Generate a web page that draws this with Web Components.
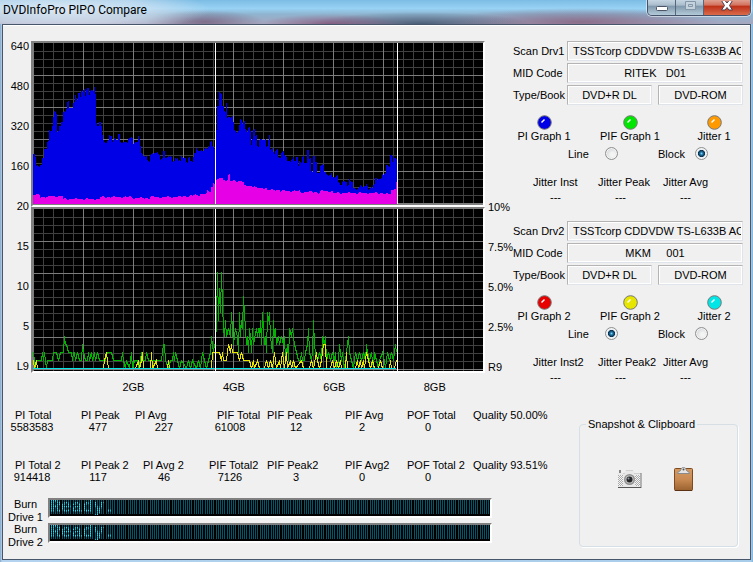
<!DOCTYPE html>
<html lang="en">
<head>
<meta charset="utf-8">
<title>DVDInfoPro PIPO Compare</title>
<style>
    body {
        margin: 0;
        font: 11px/12px "Liberation Sans", Arial, sans-serif;
        color: #000;
        background: #b3cbe6;
    }
</style>
</head>
<body>
<pipo-window heading="DVDInfoPro PIPO Compare">
    <scan-graphs slot="graphs"></scan-graphs>
    <drive-panel slot="drives" number="1" mid="RITEK   D01" colors="#0000e6,#00e600,#ff9900" mode="Block"></drive-panel>
    <drive-panel slot="drives" number="2" suffix="2" mid="MKM     001" colors="#e60000,#e6e600,#00e6e6" mode="Line"></drive-panel>
    <scan-totals slot="status"></scan-totals>
    <led-display slot="status" label="Burn Drive 1">Ready.</led-display>
    <led-display slot="status" label="Burn Drive 2">Ready.</led-display>
    <snapshot-box slot="tools"></snapshot-box>
</pipo-window>

<script>
class PipoWindow extends HTMLElement {
    connectedCallback() {
        this.attachShadow({ mode: 'open' });
        this.shadowRoot.innerHTML = `
            <style>
                :host {
                    display: flex;
                    flex-direction: column;
                    min-height: 100vh;
                    box-sizing: border-box;
                    padding: 0 2px 2px;
                    background: linear-gradient(90deg, #86a6c4, #b3d3f0 2px, #a8cdea calc(100% - 2px), #7fb4dc);
                }

                header {
                    display: flex;
                    justify-content: space-between;
                    height: 24px;
                    margin: 0 -2px;
                    background:
                        radial-gradient(ellipse 150px 24px at 60px 10px, rgba(225, 234, 244, 0.9), rgba(220, 230, 242, 0.6) 60%, transparent),
                        radial-gradient(ellipse 60px 12px at 205px 22px, rgba(110, 85, 115, 0.7), transparent),
                        radial-gradient(ellipse 70px 10px at 330px 24px, rgba(125, 70, 110, 0.7), transparent),
                        radial-gradient(ellipse 110px 12px at 420px 24px, rgba(50, 75, 100, 0.8), transparent),
                        radial-gradient(ellipse 140px 14px at 580px 22px, rgba(130, 85, 115, 0.7), transparent),
                        linear-gradient(#7cbce4, #98d2f4 35%, #8fb4cf 60%, #a7a6bf);
                }

                h1 {
                    margin: 0;
                    padding: 1px 3px;
                    font: 12px/18px Roboto, "Open Sans", sans-serif;
                }

                .buttons {
                    display: flex;
                    height: 15px;
                    margin-right: 2px;
                    border: 1px solid #45536a;
                    border-top: 0;
                    border-radius: 0 0 5px 5px;
                    box-shadow: 0 0 0 1px rgba(255, 255, 255, 0.5);
                    overflow: hidden;
                }

                button {
                    width: 28px;
                    padding: 0;
                    border: 0;
                    border-right: 1px solid #56677c;
                    background: linear-gradient(#c5d5e2, #aabccb 35%, #8098ab 40%, #b2cad8);
                }

                button.close {
                    width: 46px;
                    border-right: 0;
                    background: linear-gradient(#e0a090, #d2705c 35%, #bd2f18 40%, #d96c4a);
                }

                svg {
                    display: block;
                    margin: 0 auto;
                }

                main {
                    flex: 1;
                    border: 1px solid #47566b;
                    background: #f0f0f0;
                    box-shadow: inset 0 1px #fff;
                }

                .top {
                    display: grid;
                    grid-template-columns: 1fr 237px;
                    padding-top: 1px;
                }

                .drives {
                    padding: 15px 7px 0 0;
                }

                .bottom {
                    display: grid;
                    grid-template-columns: 1fr 159px;
                    padding: 8px 12px 11px 0;
                }
            </style>
            <header>
                <h1></h1>
                <div class="buttons">
                    <button aria-label="Minimize"><svg width="14" height="14"><rect x="1.5" y="5.500" width="11" height="4" rx="1" fill="#fff" stroke="#4a5568"/></svg></button>
                    <button aria-label="Maximize" disabled><svg width="14" height="14"><path d="M2.500 .5h10v8h-10zM5.500 3.500h4v2h-4z" fill="#c4d2de" stroke="#8496a8"/></svg></button>
                    <button class="close" aria-label="Close"><svg width="14" height="14"><path d="M1.500-.5h3.500l2 2.500 2-2.500h3.500L9.500 4.500l3 4.500H9L7 6.500 5 9H1.500l3-4.500z" fill="#fff" stroke="#4c3a48"/></svg></button>
                </div>
            </header>
            <main>
                <div class="top">
                    <slot name="graphs"></slot>
                    <div class="drives"><slot name="drives"></slot></div>
                </div>
                <div class="bottom">
                    <div><slot name="status"></slot></div>
                    <slot name="tools"></slot>
                </div>
            </main>
        `;
        this.shadowRoot.querySelector('h1').textContent = this.getAttribute('heading');
    }
}

// x,y pairs in plot pixels, 450 x 161
const PI_1 = '0,111 2,114 3,124 7,121 9,115 11,105 14,100 16,88 19,83 20,75 21,68 23,69 24,88 26,84 28,79 30,70 33,66 34,57 36,65 39,64 40,60 42,54 43,57 45,49 47,54 48,48 50,45 52,53 53,48 54,46 56,52 57,48 60,47 61,42 62,49 63,79 64,84 66,79 68,84 69,94 70,99 74,97 76,92 79,99 81,97 85,91 87,98 91,100 95,96 98,94 100,99 105,92 106,96 107,105 108,112 112,113 114,117 116,118 117,112 121,110 125,111 127,115 130,109 132,115 135,115 137,112 139,118 142,115 145,119 148,113 150,115 153,118 155,114 157,119 160,114 161,111 163,106 167,108 171,106 173,107 175,103 177,98 179,103 181,105 182,87 184,65 186,50 188,51 189,63 191,67 193,58 194,75 198,74 200,80 201,88 204,87 206,82 207,76 209,80 212,88 215,84 217,88 218,102 219,95 220,86 222,94 224,104 226,97 230,95 233,104 235,97 236,92 237,107 240,110 242,106 245,114 248,110 251,113 254,118 258,115 261,119 263,114 265,124 266,119 269,112 271,120 274,107 276,117 278,129 280,112 282,119 284,129 287,124 289,122 291,129 293,132 296,130 299,135 302,134 305,140 309,138 314,144 316,138 320,145 327,144 333,141 335,145 340,142 342,137 345,135 347,135 349,131 351,130 353,124 355,124 357,112 359,119 360,113 363,115';
const PI_2 = '0,152 7,154 17,153 30,156 47,156 67,154 100,155 117,154 150,153 160,152 167,151 174,148 178,144 180,140 183,137 186,135 190,137 195,132 197,138 209,139 211,143 219,143 222,145 234,147 247,148 267,149 284,150 287,148 300,150 339,150 352,151 358,147 361,145 363,139';

// x in plot pixels, then the failure count
const PIF_1 = '0,2 1,1 2,0 3,1 8,1 9,2 10,1 11,2 13,0 14,1 19,1 20,2 23,2 25,1 27,2 30,2 31,4 32,3 33,3 35,2 38,2 39,1 40,2 41,2 42,1 44,2 46,1 48,1 49,3 50,2 52,1 54,1 55,2 56,1 58,2 59,1 61,2 62,1 64,2 66,1 72,1 74,2 78,2 80,1 88,1 89,2 90,1 92,0 93,1 96,0 98,2 99,0 101,1 104,1 105,0 107,1 108,2 109,1 112,1 113,2 115,1 128,1 130,3 131,3 132,1 135,0 137,1 139,1 140,2 141,1 142,2 144,1 146,0 148,1 153,0 155,1 157,0 159,1 163,0 165,1 167,0 169,2 171,1 173,0 175,1 177,2 178,4 179,3 180,2 181,3 182,3 183,6 184,12 185,6 186,10 187,7 188,12 189,8 190,5 191,4 192,6 193,4 195,5 197,4 198,7 200,3 202,5 204,4 205,2 206,7 207,4 208,6 209,5 210,9 211,7 212,5 213,3 214,4 215,2 216,5 217,4 218,2 219,5 220,3 223,5 224,4 225,5 226,4 227,6 228,3 229,7 231,3 232,4 233,2 234,7 235,6 236,7 237,4 239,2 240,6 241,4 242,5 243,3 245,4 246,3 248,4 250,3 251,4 252,1 254,3 255,1 256,5 258,4 259,5 261,3 263,2 265,1 267,1 268,2 269,1 271,1 272,2 274,3 275,5 276,2 278,1 279,2 280,6 281,3 282,2 284,1 286,2 288,1 289,4 291,3 292,4 293,1 295,2 297,1 299,2 301,1 302,2 303,0 305,1 306,3 308,1 309,2 311,0 313,2 315,4 316,2 318,1 320,0 322,2 324,1 326,2 328,1 330,2 332,1 333,3 334,2 336,1 338,2 340,0 341,2 343,1 345,0 346,1 349,2 351,1 352,0 354,2 356,1 358,2 360,1 361,2 362,3 363,2';
const PIF_2 = '0,1 1,0 3,1 4,0 70,0 71,1 73,2 75,0 102,0 105,1 106,0 108,1 109,2 110,0 117,0 118,2 119,0 123,1 124,0 134,0 135,1 136,0 178,0 179,2 186,2 188,1 189,2 190,1 193,1 194,2 195,3 197,2 198,3 199,2 204,2 206,1 208,2 210,1 216,1 218,0 220,1 221,0 224,1 226,0 231,0 233,1 235,0 237,1 239,0 241,2 243,0 246,1 247,0 249,2 251,0 253,2 254,0 257,1 258,0 260,1 262,0 268,1 270,0 276,0 278,1 280,0 283,2 284,1 286,0 288,1 289,2 290,3 292,3 293,0 297,0 299,1 301,0 303,1 305,0 307,1 308,0 312,0 313,2 314,0 322,0 324,1 325,0 327,1 328,0 330,1 331,0 333,2 335,1 337,0 339,1 341,0 345,0 347,1 349,0 356,0 357,1 358,0 361,0 363,1';

const parse = (text) => text.split(' ').map((pair) => pair.split(',').map(Number));

function blocks(text, wobble) {
    const points = parse(text);
    let d = 'M0 161';
    let k = 0;
    for (let x = 0; x < 364; x++) {
        while (points[k + 1] && points[k + 1][0] <= x) k++;
        const noise = Math.round(Math.sin(x * 12.9) * Math.cos(x * 7.1) * wobble);
        d += `V${points[k][1] + noise}h1`;
    }
    return d + 'V161z';
}

function line(text) {
    return parse(text).map(([x, v]) => `${x + 0.5},${159.5 - v * 8}`).join(' ');
}

function grid() {
    let minor = '';
    let major = '';
    for (let x = 0; x < 450; x += 10) {
        const d = `M${x + 0.5} 0v162`;
        if (x % 50) minor += d; else major += d;
    }
    for (let y = 0; y <= 160; y += 8) {
        const d = `M0 ${y + 0.5}h450`;
        if (y % 32) minor += d; else if (y) major += d;
    }
    return `<path d="${minor}" stroke="#404040"/><path d="${major}" stroke="#7c7c7c"/>`;
}

class ScanGraphs extends HTMLElement {
    connectedCallback() {
        this.attachShadow({ mode: 'open' });
        const marks = '<path d="M182.500 0v162M364.500 0v162" stroke="#fff"/>';
        this.shadowRoot.innerHTML = `
            <style>
                :host {
                    display: grid;
                    grid-template-columns: 28px 1fr 28px;
                }

                .axis {
                    display: grid;
                    grid-auto-rows: 40px;
                    align-items: center;
                }

                .left {
                    text-align: right;
                    padding-right: 2px;
                }

                .right {
                    align-self: end;
                    padding: 0 0 14px 3px;
                }

                .plots {
                    padding-top: 15px;
                }

                svg {
                    display: block;
                    box-sizing: border-box;
                    width: 100%;
                    height: 166px;
                    border: 2px solid;
                    border-color: #808080 #fff #fff #808080;
                    background: #000;
                    fill: none;
                    shape-rendering: crispEdges;
                }

                .sizes {
                    display: grid;
                    grid-template-columns: 1fr 2fr 2fr 2fr 2fr;
                    line-height: 28px;
                    padding-left: 2px;
                    text-align: center;
                }
            </style>
            <div class="axis left">
                <span>640</span><span>480</span><span>320</span><span>160</span><span>20</span>
                <span>15</span><span>10</span><span>5</span><span>L9</span>
            </div>
            <div class="plots">
                <svg viewBox="0 0 450 162" preserveAspectRatio="none">
                    ${grid()}
                    <path d="${blocks(PI_1, 2)}" fill="#0000e6"/>
                    <path d="${blocks(PI_2, 1)}" fill="#e600e6"/>
                    ${marks}
                    <path d="M0 161.500h450" stroke="#808080"/>
                </svg>
                <svg viewBox="0 0 450 162" preserveAspectRatio="none">
                    ${grid()}
                    <polyline points="${line(PIF_1)}" stroke="#00b400"/>
                    <polyline points="${line(PIF_2)}" stroke="#e6e600"/>
                    <path d="M0 160.500h450" stroke="#808080"/>
                    <path d="M0 159.500h363" stroke="#00e6e6"/>
                    ${marks}
                </svg>
                <div class="sizes">
                    <span></span><span>2GB</span><span>4GB</span><span>6GB</span><span>8GB</span>
                </div>
            </div>
            <div class="axis right">
                <span>10%</span><span>7.5%</span><span>5.0%</span><span>2.5%</span><span>R9</span>
            </div>
        `;
    }
}

class DrivePanel extends HTMLElement {
    connectedCallback() {
        this.attachShadow({ mode: 'open' });
        const n = this.getAttribute('number');
        const suffix = this.getAttribute('suffix') || '';
        const colors = this.getAttribute('colors').split(',');
        const mode = this.getAttribute('mode');
        const led = (name, color) => `
            <button>
                <svg width="15" height="15"><circle cx="7.500" cy="7.500" r="6.800" fill="${color}" stroke="#777"/><path d="M4.500 7.500l3-3" stroke="#fff" stroke-width="1.500"/></svg>
                ${name} ${n}
            </button>`;
        const radio = (name) => `
            <label>${name} <input type="radio" name="style" ${name === mode ? 'checked' : ''}></label>`;
        this.shadowRoot.innerHTML = `
            <style>
                :host {
                    display: block;
                    height: 180px;
                }

                .fields {
                    display: grid;
                    grid-template-columns: 54px 1fr 1fr;
                    grid-auto-rows: 20px;
                    gap: 2px 0;
                    align-items: center;
                }

                input {
                    font: inherit;
                    margin: 0;
                }

                .fields input {
                    box-sizing: border-box;
                    width: 100%;
                    min-width: 0;
                    height: 20px;
                    padding: 0 1px;
                    border: 1px solid;
                    border-color: #b4b4b4 #dfe3ea #dfe3ea #b4b4b4;
                    background: #f0f0f0;
                    box-shadow: inset 1px 1px #fff, inset -1px -1px #fff;
                    text-align: center;
                    white-space: pre;
                }

                .fields .wide {
                    grid-column: 2 / 4;
                }

                .fields .drive {
                    padding: 0 1px 0 5px;
                    text-align: left;
                }

                .pair {
                    grid-column: 2 / 4;
                    display: flex;
                    gap: 6px;
                }

                .leds {
                    display: grid;
                    grid-template-columns: 62px 1fr 58px;
                    padding-top: 10px;
                }

                button {
                    display: grid;
                    justify-items: center;
                    padding: 0;
                    border: 0;
                    background: none;
                    font: inherit;
                    color: inherit;
                }

                .modes {
                    display: grid;
                    grid-template-columns: 50px 50px;
                    gap: 40px;
                    padding: 5px 0 16px 55px;
                }

                label {
                    display: flex;
                    justify-content: space-between;
                    align-items: center;
                }

                .fields label {
                    white-space: nowrap;
                }

                .modes input {
                    appearance: none;
                    width: 13px;
                    height: 13px;
                    border: 1px solid #8e8f8f;
                    border-radius: 50%;
                    background: radial-gradient(circle at 60% 60%, #f4f4f4 20%, #c4c8cc);
                    box-shadow: inset 0 0 0 1px #f4f4f4;
                }

                .modes input:checked {
                    background: radial-gradient(circle at 50% 50%, #7fd4f8, #1c6f9f 20%, #0b2d47 42%, #e8eef2 50%);
                }

                dl {
                    display: grid;
                    grid-template-columns: repeat(3, 65px);
                    grid-auto-flow: column;
                    grid-template-rows: 15px 15px;
                    margin: 0;
                    padding-left: 10px;
                }

                dt {
                    padding-left: 10px;
                    white-space: nowrap;
                }

                dd {
                    margin: 0;
                    text-align: center;
                }
            </style>
            <div class="fields">
                <label for="drive">Scan Drv${n}</label>
                <input class="wide drive" id="drive" readonly value="TSSTcorp CDDVDW TS-L633B AC00">
                <label for="mid">MID Code</label>
                <input class="wide" id="mid" readonly value="${this.getAttribute('mid')}">
                <label for="type">Type/Book</label>
                <div class="pair">
                    <input id="type" readonly value="DVD+R DL">
                    <input aria-label="Book" readonly value="DVD-ROM">
                </div>
            </div>
            <div class="leds">
                ${led('PI Graph', colors[0])}
                ${led('PIF Graph', colors[1])}
                ${led('Jitter', colors[2])}
            </div>
            <div class="modes">${radio('Line')}${radio('Block')}</div>
            <dl>
                <dt>Jitter Inst${suffix}</dt><dd>---</dd>
                <dt>Jitter Peak${suffix}</dt><dd>---</dd>
                <dt>Jitter Avg</dt><dd>---</dd>
            </dl>
        `;
    }
}

class ScanTotals extends HTMLElement {
    connectedCallback() {
        this.attachShadow({ mode: 'open' });
        this.shadowRoot.innerHTML = `
            <style>
                :host {
                    display: block;
                }

                table {
                    table-layout: fixed;
                    width: 100%;
                    border-collapse: collapse;
                }

                col {
                    width: 66px;
                }

                col.first {
                    width: 62px;
                }

                col.last {
                    width: auto;
                }

                th,
                td {
                    padding: 0;
                    font-weight: normal;
                    text-align: center;
                    white-space: nowrap;
                }

                td:first-child {
                    padding-right: 4px;
                }

                th {
                    padding-left: 12px;
                    text-align: left;
                }

                th.near {
                    padding-left: 4px;
                }

                th.far {
                    padding-left: 16px;
                }

                th.end {
                    padding-left: 20px;
                }

                tbody + tbody::before {
                    content: "";
                    display: table-row;
                    height: 26px;
                }
            </style>
            <table>
                <colgroup><col class="first"><col><col><col><col><col><col><col class="last"></colgroup>
                <tbody>
                    <tr><th>PI Total</th><th class="far">PI Peak</th><th class="near">PI Avg</th><th class="end">PIF Total</th><th class="near">PIF Peak</th><th class="far">PIF Avg</th><th>POF Total</th><th>Quality 50.00%</th></tr>
                    <tr><td>5583583</td><td>477</td><td>227</td><td>61008</td><td>12</td><td>2</td><td>0</td></tr>
                </tbody>
                <tbody>
                    <tr><th>PI Total 2</th><th class="far">PI Peak 2</th><th>PI Avg 2</th><th>PIF Total2</th><th class="near">PIF Peak2</th><th class="far">PIF Avg2</th><th>POF Total 2</th><th>Quality 93.51%</th></tr>
                    <tr><td>914418</td><td>117</td><td>46</td><td>7126</td><td>3</td><td>0</td><td>0</td></tr>
                </tbody>
            </table>
        `;
    }
}

class LedDisplay extends HTMLElement {
    connectedCallback() {
        this.attachShadow({ mode: 'open' });
        this.shadowRoot.innerHTML = `
            <style>
                :host {
                    display: grid;
                    grid-template-columns: 45px 1fr;
                    height: 25px;
                    padding-right: 87px;
                }

                :host(:nth-of-type(1)) {
                    margin-top: 15px;
                }

                span {
                    line-height: 13px;
                    text-align: center;
                }

                /* five lit columns and a blank one to each character cell */
                output {
                    position: relative;
                    display: block;
                    height: 16px;
                    border: 2px solid;
                    border-color: #808080 #fff #fff #808080;
                    background: #000 repeating-linear-gradient(90deg, #00566a 0 10px, #000 10px 11px) 1px 0 / 100% 14px no-repeat;
                    color: #19e4ff;
                    font: bold 18px/15px "Liberation Mono", monospace;
                    overflow: hidden;
                }

                output::after {
                    content: "";
                    position: absolute;
                    inset: 0;
                    background: repeating-linear-gradient(90deg, transparent 0 1px, #000 1px 2px, transparent 2px 3px, #000 3px 4px, transparent 4px 5px, #000 5px 6px, transparent 6px 7px, #000 7px 8px, transparent 8px 9px, #000 9px 11px) 1px 0;
                }

                slot {
                    display: block;
                    -webkit-mask: repeating-linear-gradient(#000 0 1px, rgba(0, 0, 0, 0.6) 1px 2px);
                    mask: repeating-linear-gradient(#000 0 1px, rgba(0, 0, 0, 0.6) 1px 2px);
                }
            </style>
            <span></span>
            <output><slot></slot></output>
        `;
        this.shadowRoot.querySelector('span').textContent = this.getAttribute('label');
    }
}

class SnapshotBox extends HTMLElement {
    connectedCallback() {
        this.attachShadow({ mode: 'open' });
        this.shadowRoot.innerHTML = `
            <style>
                :host {
                    display: block;
                    padding-top: 9px;
                }

                fieldset {
                    display: flex;
                    justify-content: center;
                    gap: 32px;
                    height: 129px;
                    box-sizing: border-box;
                    margin: 0;
                    padding: 36px 8px 0 0;
                    border: 1px solid #d5dfe5;
                    border-radius: 4px;
                    box-shadow: 1px 1px #fff;
                }

                legend {
                    margin-left: 6px;
                    padding: 0 2px;
                }

                button {
                    height: 26px;
                    padding: 0;
                    border: 0;
                    background: none;
                }

                svg {
                    display: block;
                }
            </style>
            <fieldset>
                <legend>Snapshot &amp; Clipboard</legend>
                <button aria-label="Snapshot">
                    <svg width="25" height="26">
                        <defs><pattern id="grip" width="2" height="2" patternUnits="userSpaceOnUse"><path fill="#f4f4f4" d="M0 0h2v2H0z"/><path fill="#aaa" d="M0 0h1v1H0zM1 1h1v1H1z"/></pattern></defs>
                        <path d="M2 4h2v3H2z" fill="#888"/>
                        <path d="M1 7h6l2-3h7l2 3h6v15H1z" fill="#e9e9e9"/>
                        <path d="M1 9h5v11H1zM18 9h5v11h-5z" fill="url(#grip)"/>
                        <path d="M9 4.500h7M6 7.500h2M17 7.500h7" stroke="#d0d0d0"/>
                        <path d="M24 7v15" stroke="#777"/>
                        <path d="M1 21.500h23" stroke="#555"/>
                        <circle cx="12.500" cy="13.500" r="5.500" fill="#909090"/>
                        <circle cx="12.500" cy="13.500" r="4" fill="#c2c2c2"/>
                        <circle cx="12.500" cy="13.500" r="3" fill="#262626"/>
                        <circle cx="11.500" cy="12.500" r="1" fill="#89a"/>
                    </svg>
                </button>
                <button aria-label="Clipboard">
                    <svg width="19" height="26">
                        <defs><linearGradient id="board" x2="0" y2="1"><stop stop-color="#d39a62"/><stop offset=".5" stop-color="#c98a52"/><stop offset="1" stop-color="#9a6230"/></linearGradient></defs>
                        <rect x=".5" y="2.500" width="18" height="22" rx="1" fill="url(#board)" stroke="#7d4a22"/>
                        <path d="M1 24.500h17" stroke="#5c3212"/>
                        <path d="M3.500 7.500c0-2.500 3-1.500 3.500-4 .3-1.500 1-2 2.500-2s2.200.5 2.500 2c.5 2.500 3.500 1.500 3.500 4z" fill="#e4e4e4" stroke="#8a8a8a"/>
                        <circle cx="9.500" cy="3.500" r="1" fill="#555"/>
                    </svg>
                </button>
            </fieldset>
        `;
    }
}

customElements.define('pipo-window', PipoWindow);
customElements.define('scan-graphs', ScanGraphs);
customElements.define('drive-panel', DrivePanel);
customElements.define('scan-totals', ScanTotals);
customElements.define('led-display', LedDisplay);
customElements.define('snapshot-box', SnapshotBox);
</script>
</body>
</html>
